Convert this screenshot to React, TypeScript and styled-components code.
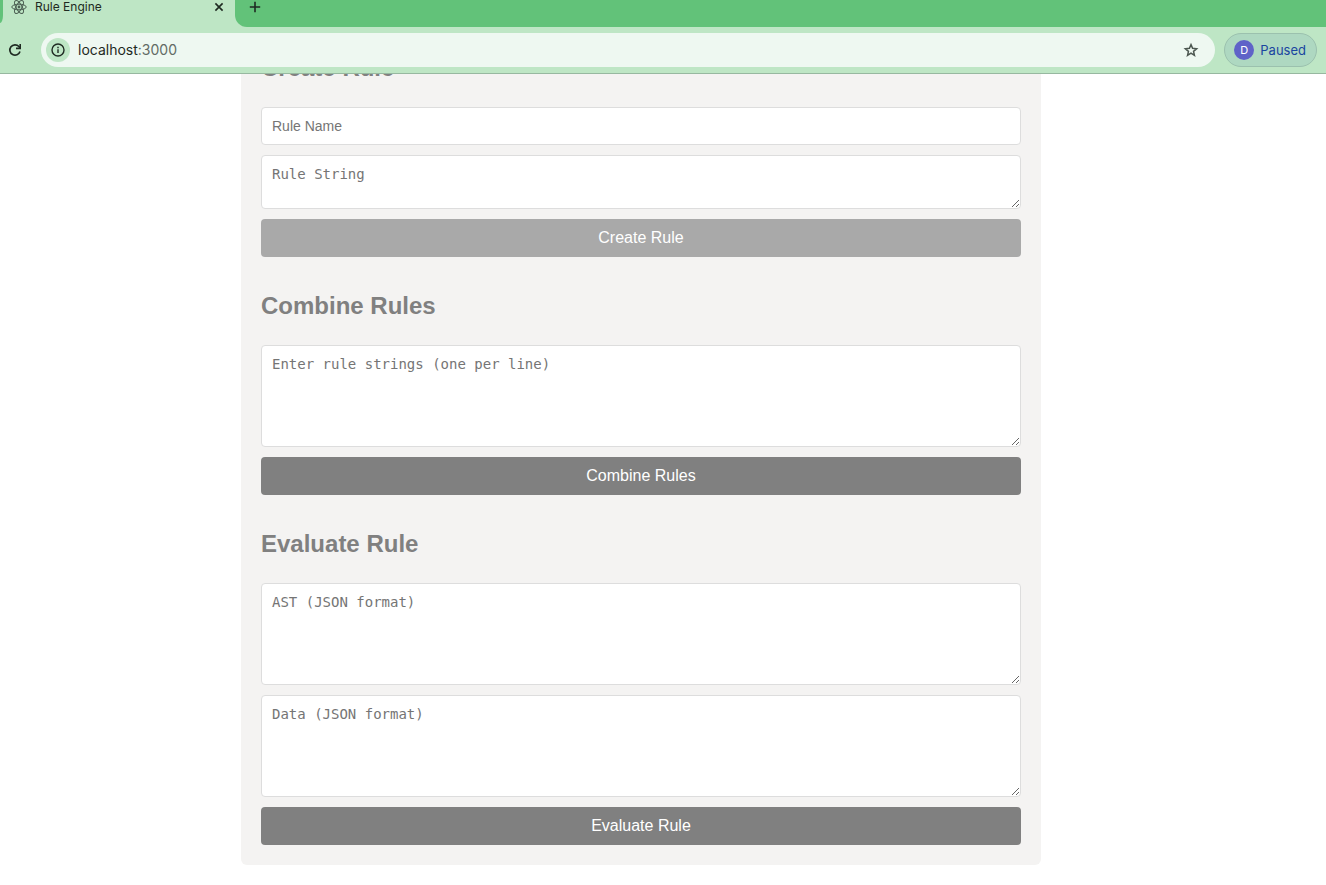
import React from "react";
import styled, { createGlobalStyle } from "styled-components";

const GlobalStyle = createGlobalStyle`
  *, *::before, *::after { box-sizing: border-box; }
  body {
    margin: 0;
    background: #ffffff;
    font-family: "Liberation Sans", Arial, sans-serif;
  }
`;

const Browser = styled.div`
  display: flex;
  flex-direction: column;
  min-height: 100vh;
`;

const Chrome = styled.header`
  position: relative;
  z-index: 1;
  background: #bee6c5;
  border-bottom: 1px solid #97b8a0;
  font-family: Inter, sans-serif;
  color: #1f2a22;
`;

const TabStrip = styled.div`
  display: flex;
  height: 27px;
  overflow: hidden;
`;

const StripEdge = styled.div`
  width: 3px;
  height: 23px;
  background: #62c279;
  border-bottom-right-radius: 3px 8px;
`;

const Tab = styled.div`
  display: flex;
  align-items: center;
  gap: 8px;
  width: 232px;
  height: 14px;
  padding: 0 8px;
`;

const TabTitle = styled.span`
  flex: 1;
  font-size: 12px;
  line-height: 14px;
`;

const StripRest = styled.div`
  flex: 1;
  padding-left: 12px;
  background: #62c279;
  border-bottom-left-radius: 12px;
`;

const IconButton = styled.button<{ $size: number }>`
  display: flex;
  flex: none;
  align-items: center;
  justify-content: center;
  width: ${(p) => p.$size}px;
  height: ${(p) => p.$size}px;
  padding: 0;
  border: 0;
  border-radius: 50%;
  background: none;
  color: inherit;
`;

const NewTab = styled(IconButton)`
  width: 16px;
  height: 14px;
`;

const Toolbar = styled.div`
  display: flex;
  align-items: center;
  height: 46px;
  padding: 0 9px 0 5px;
`;

const AddressBar = styled.div`
  display: flex;
  flex: 1;
  align-items: center;
  height: 34px;
  margin: 0 9px 0 16px;
  padding: 0 14px 0 5px;
  border-radius: 17px;
  background: #eef8f1;
`;

const SiteInfo = styled(IconButton)`
  background: #bee6c5;
`;

const Address = styled.div`
  flex: 1;
  padding-left: 8px;
  font-size: 14px;
  line-height: 20px;
`;

const Port = styled.span`
  color: #626b65;
`;

const Profile = styled.button`
  display: flex;
  align-items: center;
  gap: 6px;
  height: 34px;
  padding: 0 10px 0 9px;
  border: 1px solid #9bc1ae;
  border-radius: 17px;
  background: #aed8c1;
  color: #1a45a0;
  font-family: inherit;
  font-size: 13px;
  line-height: 20px;
`;

const Avatar = styled.span`
  width: 20px;
  height: 20px;
  border-radius: 50%;
  background: #5f62c8;
  color: #ffffff;
  font-size: 11px;
  line-height: 20px;
  text-align: center;
`;

const Viewport = styled.main`
  flex: 1;
  overflow: hidden;
  padding: 0 44px 19px 0;
`;

/* The page is scrolled, so the panel starts beneath the toolbar. */
const Panel = styled.div`
  display: flex;
  flex-direction: column;
  gap: 35px;
  max-width: 800px;
  margin: -40px auto 0;
  padding: 20px;
  border-radius: 6px;
  background: #f4f3f2;
`;

const Section = styled.form`
  display: flex;
  flex-direction: column;
  gap: 10px;
`;

const Heading = styled.h2`
  margin: 0 0 15px;
  color: #808080;
  font-size: 24px;
  line-height: 28px;
`;

const TextInput = styled.input`
  width: 100%;
  height: 38px;
  padding: 10px;
  border: 1px solid #dddddd;
  border-radius: 4px;
  background: #ffffff;
  font-family: inherit;
  font-size: 14px;
  &::placeholder { color: #757575; }
`;

const TextArea = styled.textarea<{ $tall?: boolean }>`
  display: block;
  width: 100%;
  height: ${(p) => (p.$tall ? 102 : 54)}px;
  padding: 10px;
  border: 1px solid #dddddd;
  border-radius: 4px;
  background: #ffffff;
  font-family: "DejaVu Sans Mono", monospace;
  font-size: 14px;
  line-height: 16px;
  resize: vertical;
  &::placeholder { color: #757575; }
`;

const Submit = styled.button<{ $hovered?: boolean }>`
  height: 38px;
  padding: 0 10px;
  border: 0;
  border-radius: 4px;
  background: ${(p) => (p.$hovered ? "#a9a9a9" : "#808080")};
  color: #ffffff;
  font-family: inherit;
  font-size: 16px;
  line-height: 18px;
`;

const ReactLogo = () => (
  <svg width="16" height="16" viewBox="0 0 16 16" fill="none" stroke="#4b5f52" strokeWidth="1" aria-hidden="true">
    <ellipse cx="8" cy="8" rx="7.2" ry="2.8" />
    <ellipse cx="8" cy="8" rx="7.2" ry="2.8" transform="rotate(60 8 8)" />
    <ellipse cx="8" cy="8" rx="7.2" ry="2.8" transform="rotate(120 8 8)" />
    <circle cx="8" cy="8" r="1.4" fill="#4b5f52" stroke="none" />
  </svg>
);

const CloseIcon = () => (
  <svg width="10" height="10" viewBox="0 0 10 10" stroke="currentColor" strokeWidth="1.6" aria-hidden="true">
    <path d="M1.4 1.4 8.6 8.6M8.6 1.4 1.4 8.6" />
  </svg>
);

const PlusIcon = () => (
  <svg width="12" height="12" viewBox="0 0 12 12" stroke="currentColor" strokeWidth="1.6" aria-hidden="true">
    <path d="M6 .8v10.4M.8 6h10.4" />
  </svg>
);

const ReloadIcon = () => (
  <svg width="20" height="20" viewBox="0 0 20 20" fill="none" aria-hidden="true">
    <path d="M15 11.6A5.2 5.2 0 1 1 13.9 6.5L15 7.8" stroke="currentColor" strokeWidth="1.7" />
    <path d="M16 4v5.2h-5V7.6h3.4V4z" fill="currentColor" />
  </svg>
);

const InfoIcon = () => (
  <svg width="16" height="16" viewBox="0 0 16 16" fill="none" stroke="currentColor" strokeWidth="1.4" aria-hidden="true">
    <circle cx="8" cy="8" r="6" />
    <path d="M8 7.3v3.8M8 4.8v1.5" />
  </svg>
);

const StarIcon = () => (
  <svg width="18" height="18" viewBox="0 0 24 24" fill="none" stroke="#4c5750" strokeWidth="2" aria-hidden="true">
    <path d="m12 4.8 2.1 5 5.4.5-4.1 3.5 1.2 5.3L12 16.3l-4.6 2.8 1.2-5.3-4.1-3.5 5.4-.5z" />
  </svg>
);

export default function App() {
  return (
    <>
      <GlobalStyle />
      <Browser>
        <Chrome>
          <TabStrip>
            <StripEdge />
            <Tab>
              <ReactLogo />
              <TabTitle>Rule Engine</TabTitle>
              <IconButton type="button" $size={16} aria-label="Close tab">
                <CloseIcon />
              </IconButton>
            </Tab>
            <StripRest>
              <NewTab type="button" $size={16} aria-label="New tab">
                <PlusIcon />
              </NewTab>
            </StripRest>
          </TabStrip>
          <Toolbar>
            <IconButton type="button" $size={20} aria-label="Reload">
              <ReloadIcon />
            </IconButton>
            <AddressBar>
              <SiteInfo type="button" $size={24} aria-label="View site information">
                <InfoIcon />
              </SiteInfo>
              <Address>
                localhost<Port>:3000</Port>
              </Address>
              <IconButton type="button" $size={20} aria-label="Bookmark this tab">
                <StarIcon />
              </IconButton>
            </AddressBar>
            <Profile type="button">
              <Avatar>D</Avatar>
              Paused
            </Profile>
          </Toolbar>
        </Chrome>
        <Viewport>
          <Panel>
            <Section>
              <Heading>Create Rule</Heading>
              <TextInput type="text" placeholder="Rule Name" aria-label="Rule Name" />
              <TextArea placeholder="Rule String" aria-label="Rule String" />
              <Submit type="button" $hovered>Create Rule</Submit>
            </Section>
            <Section>
              <Heading>Combine Rules</Heading>
              <TextArea
                $tall
                placeholder="Enter rule strings (one per line)"
                aria-label="Rule strings, one per line"
              />
              <Submit type="button">Combine Rules</Submit>
            </Section>
            <Section>
              <Heading>Evaluate Rule</Heading>
              <TextArea $tall placeholder="AST (JSON format)" aria-label="AST (JSON format)" />
              <TextArea $tall placeholder="Data (JSON format)" aria-label="Data (JSON format)" />
              <Submit type="button">Evaluate Rule</Submit>
            </Section>
          </Panel>
        </Viewport>
      </Browser>
    </>
  );
}
